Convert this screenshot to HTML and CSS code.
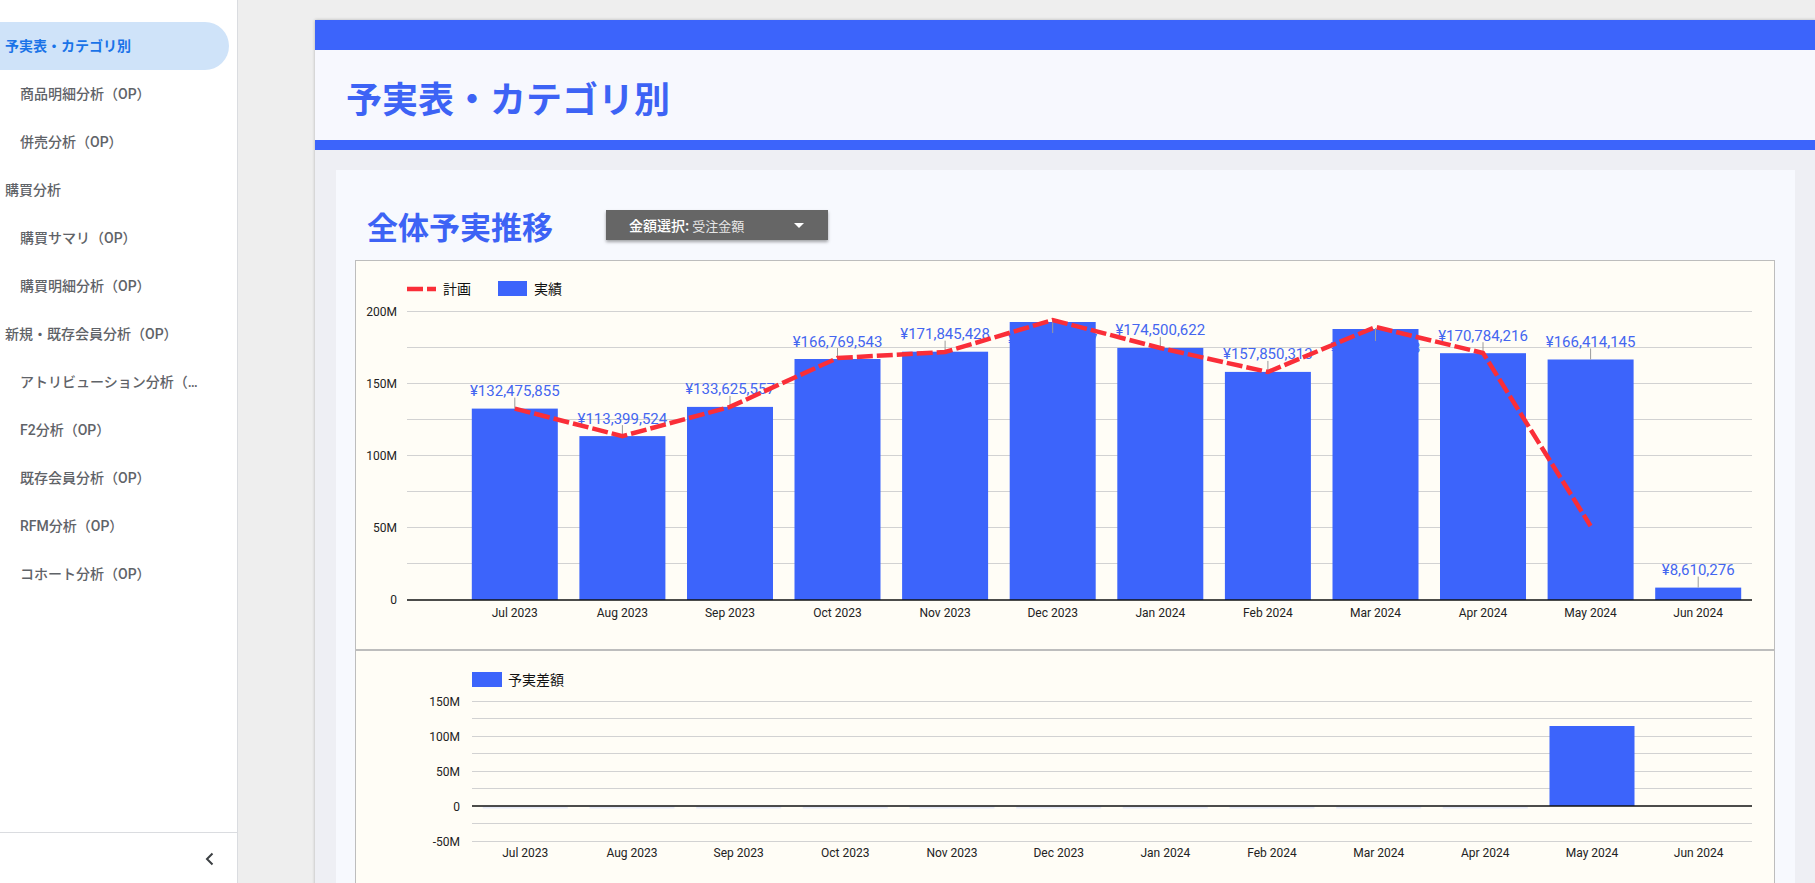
FILE: index.html
```html
<!DOCTYPE html>
<html lang="ja">
<head>
<meta charset="utf-8">
<title>予実表・カテゴリ別</title>
<link rel="stylesheet" href="styles.css">
</head>
<body>
<div class="app">
  <aside class="sidebar">
    <nav class="nav">
      <a class="nav-item lvl1 active">予実表・カテゴリ別</a>
      <a class="nav-item lvl2">商品明細分析（OP）</a>
      <a class="nav-item lvl2">併売分析（OP）</a>
      <a class="nav-item lvl1">購買分析</a>
      <a class="nav-item lvl2">購買サマリ（OP）</a>
      <a class="nav-item lvl2">購買明細分析（OP）</a>
      <a class="nav-item lvl1">新規・既存会員分析（OP）</a>
      <a class="nav-item lvl2 clip">アトリビューション分析（OP）</a>
      <a class="nav-item lvl2">F2分析（OP）</a>
      <a class="nav-item lvl2">既存会員分析（OP）</a>
      <a class="nav-item lvl2">RFM分析（OP）</a>
      <a class="nav-item lvl2">コホート分析（OP）</a>
    </nav>
    <div class="sidebar-foot">
      <svg class="chevron" width="24" height="24" viewBox="0 0 24 24"><path d="M14.5 6.5 L9 12 L14.5 17.5" fill="none" stroke="#3c4043" stroke-width="2"/></svg>
    </div>
  </aside>
  <main class="stage">
    <div class="canvas">
      <div class="hdr-bar"></div>
      <header class="hdr"><h1 class="hdr-title">予実表・カテゴリ別</h1></header>
      <div class="hdr-bar thin"></div>
      <section class="panel">
        <div class="panel-head">
          <h2 class="panel-title">全体予実推移</h2>
          <div class="dropdown">
            <span class="dd-label">金額選択:</span><span class="dd-value">受注金額</span>
            <svg class="dd-caret" width="10" height="5" viewBox="0 0 10 5"><path d="M0 0 L10 0 L5 5 Z" fill="#fff"/></svg>
          </div>
        </div>

        <div class="chart chart-top">
          <svg width="1418" height="388" viewBox="0 0 1418 388">
            <!-- legend -->
            <line x1="51" y1="28" x2="80" y2="28" class="plan-line" />
            <text x="87" y="33" class="legend-text">計画</text>
            <rect x="142" y="20" width="29" height="15" class="bar" />
            <text x="178" y="33" class="legend-text">実績</text>

            <!-- grid -->
            <g class="grid">
              <line x1="51" x2="1396" y1="50.5" y2="50.5"/>
              <line x1="51" x2="1396" y1="86.5" y2="86.5"/>
              <line x1="51" x2="1396" y1="122.5" y2="122.5"/>
              <line x1="51" x2="1396" y1="158.5" y2="158.5"/>
              <line x1="51" x2="1396" y1="194.5" y2="194.5"/>
              <line x1="51" x2="1396" y1="230.5" y2="230.5"/>
              <line x1="51" x2="1396" y1="266.5" y2="266.5"/>
              <line x1="51" x2="1396" y1="302.5" y2="302.5"/>
            </g>
            <g class="axis-text" text-anchor="end">
              <text x="41" y="54.5">200M</text>
              <text x="41" y="126.5">150M</text>
              <text x="41" y="198.5">100M</text>
              <text x="41" y="270.5">50M</text>
              <text x="41" y="343">0</text>
            </g>

            <!-- labels hidden under bars -->
            <g class="val-text" text-anchor="middle">
              <text x="696.7" y="83.5">¥192,415,847</text>
              <text x="1019.5" y="91.5">¥187,562,013</text>
            </g>

            <!-- bars -->
            <g class="bar">
              <rect x="115.8" y="147.6" width="86" height="191.4"/>
              <rect x="223.4" y="175.1" width="86" height="163.9"/>
              <rect x="331.0" y="145.9" width="86" height="193.1"/>
              <rect x="438.5" y="98.0" width="86" height="241.0"/>
              <rect x="546.1" y="90.7" width="86" height="248.3"/>
              <rect x="653.7" y="61.0" width="86" height="278.0"/>
              <rect x="761.3" y="86.9" width="86" height="252.1"/>
              <rect x="868.9" y="110.9" width="86" height="228.1"/>
              <rect x="976.5" y="68.0" width="86" height="271.0"/>
              <rect x="1084.0" y="92.2" width="86" height="246.8"/>
              <rect x="1191.6" y="98.5" width="86" height="240.5"/>
              <rect x="1299.2" y="326.6" width="86" height="12.4"/>
            </g>

            <!-- leader lines -->
            <g class="leader">
              <line x1="158.8" x2="158.8" y1="136.6" y2="147.6"/>
              <line x1="266.4" x2="266.4" y1="164.1" y2="175.1"/>
              <line x1="374.0" x2="374.0" y1="134.9" y2="145.9"/>
              <line x1="481.5" x2="481.5" y1="87.0" y2="98.0"/>
              <line x1="589.1" x2="589.1" y1="79.7" y2="90.7"/>
              <line x1="696.7" x2="696.7" y1="59" y2="72"/>
              <line x1="804.3" x2="804.3" y1="75.9" y2="86.9"/>
              <line x1="911.9" x2="911.9" y1="99.9" y2="110.9"/>
              <line x1="1019.5" x2="1019.5" y1="67" y2="80"/>
              <line x1="1127.0" x2="1127.0" y1="81.2" y2="92.2"/>
              <line x1="1234.6" x2="1234.6" y1="87.5" y2="98.5"/>
              <line x1="1342.2" x2="1342.2" y1="315.6" y2="326.6"/>
            </g>

            <!-- value labels -->
            <g class="val-text" text-anchor="middle">
              <text x="158.8" y="135.1">¥132,475,855</text>
              <text x="266.4" y="162.6">¥113,399,524</text>
              <text x="374.0" y="133.4">¥133,625,557</text>
              <text x="481.5" y="85.5">¥166,769,543</text>
              <text x="589.1" y="78.2">¥171,845,428</text>
              <text x="804.3" y="74.4">¥174,500,622</text>
              <text x="911.9" y="98.4">¥157,850,313</text>
              <text x="1127.0" y="79.7">¥170,784,216</text>
              <text x="1234.6" y="86.0">¥166,414,145</text>
              <text x="1342.2" y="314.1">¥8,610,276</text>
            </g>

            <!-- axis -->
            <line x1="51" x2="1396" y1="339" y2="339" class="zero"/>

            <!-- plan line -->
            <polyline class="plan-line" points="158.8,147.6 266.4,175.1 374.0,145.9 481.5,97 589.1,91 696.7,59 804.3,87 911.9,111 1019.5,66 1127.0,92 1234.6,265"/>

            <g class="axis-text" text-anchor="middle">
              <text x="158.8" y="356">Jul 2023</text>
              <text x="266.4" y="356">Aug 2023</text>
              <text x="374.0" y="356">Sep 2023</text>
              <text x="481.5" y="356">Oct 2023</text>
              <text x="589.1" y="356">Nov 2023</text>
              <text x="696.7" y="356">Dec 2023</text>
              <text x="804.3" y="356">Jan 2024</text>
              <text x="911.9" y="356">Feb 2024</text>
              <text x="1019.5" y="356">Mar 2024</text>
              <text x="1127.0" y="356">Apr 2024</text>
              <text x="1234.6" y="356">May 2024</text>
              <text x="1342.2" y="356">Jun 2024</text>
            </g>
          </svg>
        </div>

        <div class="chart chart-bottom">
          <svg width="1418" height="250" viewBox="0 0 1418 250">
            <rect x="116" y="21" width="30" height="15" class="bar"/>
            <text x="152" y="34" class="legend-text">予実差額</text>

            <g class="grid">
              <line x1="116" x2="1396" y1="50.5" y2="50.5"/>
              <line x1="116" x2="1396" y1="67.5" y2="67.5"/>
              <line x1="116" x2="1396" y1="85.5" y2="85.5"/>
              <line x1="116" x2="1396" y1="102.5" y2="102.5"/>
              <line x1="116" x2="1396" y1="120.5" y2="120.5"/>
              <line x1="116" x2="1396" y1="137.5" y2="137.5"/>
              <line x1="116" x2="1396" y1="172.5" y2="172.5"/>
              <line x1="116" x2="1396" y1="190.5" y2="190.5"/>
            </g>
            <g class="axis-text" text-anchor="end">
              <text x="104" y="54.5">150M</text>
              <text x="104" y="89.5">100M</text>
              <text x="104" y="124.5">50M</text>
              <text x="104" y="159.5">0</text>
              <text x="104" y="194.5">-50M</text>
            </g>

            <g class="bar-faint">
              <rect x="126.8" y="155.5" width="85" height="2"/>
              <rect x="233.5" y="155.5" width="85" height="2"/>
              <rect x="340.2" y="155.5" width="85" height="2"/>
              <rect x="446.8" y="155.5" width="85" height="2"/>
              <rect x="553.5" y="155.5" width="85" height="2"/>
              <rect x="660.2" y="155.5" width="85" height="2"/>
              <rect x="766.8" y="155.5" width="85" height="2"/>
              <rect x="873.5" y="155.5" width="85" height="2"/>
              <rect x="980.2" y="155.5" width="85" height="2"/>
              <rect x="1086.8" y="155.5" width="85" height="2"/>
            </g>
            <rect x="1193.5" y="75" width="85" height="80" class="bar"/>
            <line x1="116" x2="1396" y1="155" y2="155" class="zero"/>

            <g class="axis-text" text-anchor="middle">
              <text x="169.3" y="206">Jul 2023</text>
              <text x="276.0" y="206">Aug 2023</text>
              <text x="382.7" y="206">Sep 2023</text>
              <text x="489.3" y="206">Oct 2023</text>
              <text x="596.0" y="206">Nov 2023</text>
              <text x="702.7" y="206">Dec 2023</text>
              <text x="809.3" y="206">Jan 2024</text>
              <text x="916.0" y="206">Feb 2024</text>
              <text x="1022.7" y="206">Mar 2024</text>
              <text x="1129.3" y="206">Apr 2024</text>
              <text x="1236.0" y="206">May 2024</text>
              <text x="1342.7" y="206">Jun 2024</text>
            </g>
          </svg>
        </div>
      </section>
    </div>
  </main>
</div>
</body>
</html>
```

FILE: styles.css
```css
html, body {
  margin: 0;
  padding: 0;
  height: 100%;
  overflow: hidden;
}

body {
  font-family: Roboto, "Noto Sans CJK JP", sans-serif;
  background: #eeeeee;
}

.app {
  display: flex;
  height: 883px;
  overflow: hidden;
}

/* ---------- sidebar ---------- */
.sidebar {
  width: 237px;
  flex-shrink: 0;
  background: #ffffff;
  border-right: 1px solid #dadce0;
  display: flex;
  flex-direction: column;
  justify-content: space-between;
}

.nav {
  padding-top: 22px;
  display: flex;
  flex-direction: column;
}

.nav-item {
  display: block;
  height: 48px;
  line-height: 48px;
  font-size: 14px;
  font-weight: 500;
  color: #5f6368;
  white-space: nowrap;
  overflow: hidden;
  text-overflow: ellipsis;
  box-sizing: border-box;
  width: 208px;
}

.nav-item.lvl1 {
  padding-left: 5px;
}

.nav-item.lvl2 {
  padding-left: 20px;
}

.nav-item.clip {
  width: 200px;
}

.nav-item.active {
  width: 229px;
  background: #cfe3f9;
  color: #1a73e8;
  font-weight: 700;
  border-radius: 0 24px 24px 0;
}

.sidebar-foot {
  height: 48px;
  border-top: 1px solid #dadce0;
  display: flex;
  align-items: center;
  justify-content: flex-end;
  padding-right: 15px;
  padding-top: 2px;
  box-sizing: content-box;
}

/* ---------- stage / canvas ---------- */
.stage {
  flex: 1;
  background: #eeeeee;
  padding: 20px 0 0 77px;
  overflow: hidden;
  display: flex;
  align-items: flex-start;
}

.canvas {
  width: 1501px;
  flex-shrink: 0;
  background: #eeeff4;
  box-shadow: 0 0 3px rgba(0, 0, 0, 0.25);
  display: flex;
  flex-direction: column;
  min-height: 900px;
}

.canvas > * {
  flex-shrink: 0;
}

.hdr-bar {
  height: 30px;
  background: #3c64fb;
}

.hdr-bar.thin {
  height: 10px;
}

.hdr {
  height: 90px;
  background: #f7f8fe;
  display: flex;
  align-items: center;
  padding-left: 31px;
  padding-top: 4px;
  box-sizing: border-box;
}

.hdr-title {
  margin: 0;
  font-family: "Noto Sans CJK JP", sans-serif;
  font-size: 36px;
  font-weight: 700;
  color: #3d63f5;
  line-height: 1;
}

.panel {
  margin: 20px 21px 0 21px;
  background: #f7f9fe;
  padding: 0 20px 0 19px;
  flex: 1 0 auto;
}

.panel-head {
  height: 90px;
  box-sizing: border-box;
  padding: 20px 0 0 12px;
  display: flex;
  align-items: center;
}

.panel-title {
  margin: 0 53px 0 0;
  font-family: "Noto Sans CJK JP", sans-serif;
  font-size: 31px;
  font-weight: 700;
  color: #3d63f5;
  line-height: 1;
}

.dropdown {
  width: 222px;
  height: 30px;
  box-sizing: border-box;
  background: #666666;
  box-shadow: 0 2px 3px rgba(0, 0, 0, 0.35);
  display: flex;
  align-items: center;
  padding: 0 24px 0 23px;
  color: #ffffff;
  font-size: 14px;
  font-family: "Noto Sans CJK JP", sans-serif;
}

.dd-label {
  font-weight: 500;
  color: #ffffff;
}

.dd-value {
  margin-left: 3px;
  font-size: 13px;
  color: #e6e6e6;
}

.dd-caret {
  margin-left: auto;
}

/* ---------- charts ---------- */
.chart {
  border: 1px solid #bdbdbd;
  background: #fffdf6;
}

.chart svg {
  display: block;
}

.chart-top {
  height: 388px;
}

.chart-bottom {
  height: 260px;
}

.chart text {
  font-family: Roboto, "Noto Sans CJK JP", sans-serif;
}

.legend-text {
  font-size: 14px;
  fill: #111111;
}

.axis-text {
  font-size: 12px;
  fill: #222222;
}

.val-text {
  font-size: 15px;
  fill: #4466f0;
}

.grid line {
  stroke: #d2d2d2;
  stroke-width: 1;
}

.zero {
  stroke: #111111;
  stroke-width: 1.5;
}

.bar,
.bar rect {
  fill: #3c64fb;
}

.bar-faint rect {
  fill: #3c64fb;
  opacity: 0.12;
}

.leader line {
  stroke: #9a9a9a;
  stroke-width: 1;
}

.plan-line {
  fill: none;
  stroke: #fa2e38;
  stroke-width: 4.5;
  stroke-dasharray: 16 4;
}
```
